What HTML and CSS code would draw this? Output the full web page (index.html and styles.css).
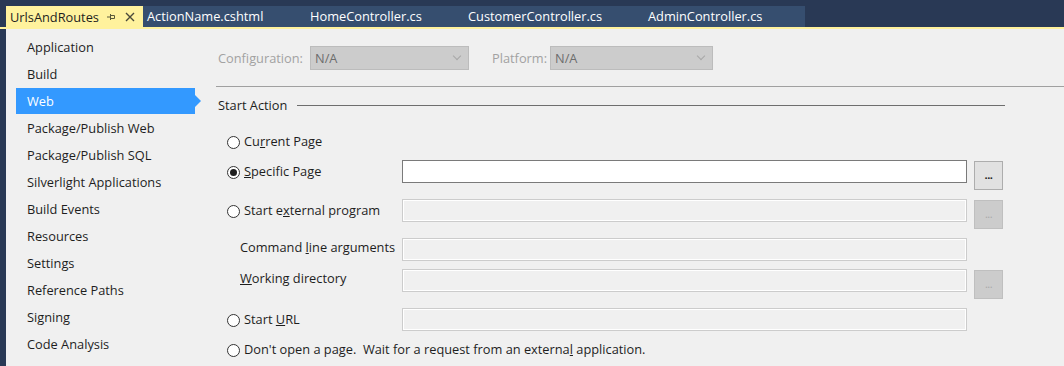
FILE: index.html
```html
<!DOCTYPE html>
<html lang="en">
<head>
  <meta charset="UTF-8">
  <title>UrlsAndRoutes - Web</title>
  <link rel="stylesheet" href="styles.css">
</head>
<body>
  <div class="tabbar">
    <div class="tab active">
      <span class="tab-name">UrlsAndRoutes</span>
      <svg class="pin" width="10" height="10" viewBox="0 0 10 10"><path d="M1 5h3M4.5 2v6M4.5 3.5h4v3h-4" fill="none" stroke="#5a5a3a" stroke-width="1"/></svg>
      <svg class="close" width="10" height="10" viewBox="0 0 10 10"><path d="M1 1l8 8M9 1l-8 8" stroke="#4a4a3a" stroke-width="1.4"/></svg>
    </div>
    <div class="tab">ActionName.cshtml</div>
    <div class="tab">HomeController.cs</div>
    <div class="tab">CustomerController.cs</div>
    <div class="tab">AdminController.cs</div>
  </div>

  <div class="main">
    <ul class="nav">
      <li>Application</li>
      <li>Build</li>
      <li class="selected">Web</li>
      <li>Package/Publish Web</li>
      <li>Package/Publish SQL</li>
      <li>Silverlight Applications</li>
      <li>Build Events</li>
      <li>Resources</li>
      <li>Settings</li>
      <li>Reference Paths</li>
      <li>Signing</li>
      <li>Code Analysis</li>
    </ul>

    <div class="content">
      <div class="config-row">
        <label class="dim">Configuration:</label>
        <div class="select config">N/A<span class="chev"></span></div>
        <label class="dim platform-label">Platform:</label>
        <div class="select platform">N/A<span class="chev"></span></div>
      </div>
      <div class="separator"></div>

      <div class="group-title"><span>Start Action</span><div class="rule"></div></div>

      <div class="options">
        <div class="row r-current">
          <div class="choice"><span class="radio"></span><span class="lbl">Cu<u>r</u>rent Page</span></div>
        </div>
        <div class="row r-specific">
          <div class="choice"><span class="radio checked"></span><span class="lbl"><u>S</u>pecific Page</span></div>
          <div class="field"></div>
          <div class="browse">...</div>
        </div>
        <div class="row r-external">
          <div class="choice"><span class="radio"></span><span class="lbl">Start e<u>x</u>ternal program</span></div>
          <div class="field disabled"></div>
          <div class="browse disabled">...</div>
        </div>
        <div class="row r-cmd">
          <div class="choice sub"><span class="lbl">Command <u>l</u>ine arguments</span></div>
          <div class="field disabled"></div>
        </div>
        <div class="row r-work">
          <div class="choice sub"><span class="lbl"><u>W</u>orking directory</span></div>
          <div class="field disabled"></div>
          <div class="browse disabled">...</div>
        </div>
        <div class="row r-url">
          <div class="choice"><span class="radio"></span><span class="lbl">Start <u>U</u>RL</span></div>
          <div class="field disabled"></div>
        </div>
        <div class="row r-none">
          <div class="choice wide"><span class="radio"></span><span class="lbl">Don't open a page.&nbsp; Wait for a request from an externa<u>l</u> application.</span></div>
        </div>
      </div>
    </div>
  </div>
</body>
</html>
```

FILE: styles.css
```css
* {
  box-sizing: border-box;
}
body {
  margin: 0;
  width: 1064px;
  height: 366px;
  overflow: hidden;
  background: #f0f0f0;
  font-family: "Open Sans", "Noto Sans", sans-serif;
  font-size: 12.8px;
  color: #1e1e1e;
}
.tabbar {
  display: flex;
  height: 29px;
  padding: 6px 0 0 6px;
  background: #293955;
  border-bottom: 2px solid #fff29d;
}
.tab {
  height: 21px;
  line-height: 20px;
  padding: 0 0 0 4px;
  background: #364e6f;
  color: #fff;
  white-space: nowrap;
}
.tab:nth-child(2) { width: 163px; }
.tab:nth-child(3) { width: 158px; }
.tab:nth-child(4) { width: 180px; }
.tab:nth-child(5) { width: 161px; }
.tab.active {
  display: flex;
  align-items: center;
  width: 137px;
  background: #fff29d;
  color: #1e1e1e;
}
.tab.active .pin {
  margin-left: auto;
}
.tab.active .close {
  margin: 0 8px 0 9px;
}
.main {
  display: flex;
  height: 337px;
  border-left: 6px solid #293955;
}
.nav {
  list-style: none;
  margin: 0;
  padding: 5px 0 0 10px;
  width: 210px;
  flex: none;
}
.nav li {
  position: relative;
  width: 179px;
  height: 27px;
  line-height: 27px;
  padding-left: 11px;
}
.nav li.selected {
  background: #3399ff;
  color: #fff;
  height: 26px;
  margin-bottom: 1px;
}
.nav li.selected::after {
  content: "";
  position: absolute;
  right: -6px;
  top: 7px;
  border-left: 6px solid #3399ff;
  border-top: 6px solid transparent;
  border-bottom: 6px solid transparent;
}
.content {
  flex: 1;
  padding-top: 17px;
}
.config-row {
  display: flex;
  align-items: center;
  height: 24px;
  padding-left: 2px;
}
.dim {
  color: #a2a2a2;
  width: 92px;
}
.platform-label {
  width: 58px;
  margin-left: 23px;
}
.select {
  position: relative;
  height: 24px;
  line-height: 22px;
  padding-left: 4px;
  background: #cccccc;
  border: 1px solid #bcbcbc;
  color: #6d6d6d;
}
.select.config { width: 159px; }
.select.platform { width: 163px; }
.chev {
  position: absolute;
  right: 8px;
  top: 6px;
  width: 6px;
  height: 6px;
  border-right: 1px solid #a8a8a8;
  border-bottom: 1px solid #a8a8a8;
  transform: rotate(45deg);
}
.separator {
  margin-top: 16px;
  height: 1px;
  background: #a0a0a0;
}
.group-title {
  display: flex;
  align-items: center;
  width: 789px;
  height: 20px;
  margin-top: 8px;
  padding-left: 2px;
}
.group-title .rule {
  flex: 1;
  height: 1px;
  margin-left: 10px;
  background: #6e6e6e;
}
.options {
  padding-left: 11px;
  margin-top: 15px;
}
.row {
  display: flex;
  align-items: flex-start;
  height: 23px;
}
.choice {
  display: flex;
  align-items: flex-start;
  width: 175px;
  flex: none;
}
.choice.sub {
  padding-left: 13px;
}
.choice.wide {
  width: auto;
}
.lbl {
  padding-top: 1px;
  line-height: 21px;
  white-space: nowrap;
}
.choice.sub .lbl {
  padding-top: 0;
  line-height: 18px;
}
.r-specific { margin-top: 7px; }
.r-external { margin-top: 16px; }
.r-cmd { margin-top: 16px; }
.r-work { margin-top: 8px; }
.r-url { margin-top: 16px; }
.r-none { margin-top: 7px; }
.radio {
  flex: none;
  width: 13px;
  height: 13px;
  margin: 6px 4px 0 0;
  border: 1px solid #333;
  border-radius: 50%;
  background: #fff;
  position: relative;
}
.radio.checked::after {
  content: "";
  position: absolute;
  left: 2px;
  top: 2px;
  width: 7px;
  height: 7px;
  border-radius: 50%;
  background: #1e1e1e;
}
.field {
  flex: none;
  width: 565px;
  height: 23px;
  background: #fff;
  border: 1px solid #7a7a7a;
}
.field.disabled {
  background: #f0f0f0;
  border: 1px solid #cccccc;
  box-shadow: inset 0 0 0 1px #fff;
}
.browse {
  flex: none;
  width: 29px;
  height: 29px;
  margin: 1px 0 0 7px;
  text-align: center;
  line-height: 26px;
  font-size: 11px;
  font-weight: bold;
  letter-spacing: -0.5px;
  background: #e1e1e1;
  border: 1px solid #adadad;
}
.browse.disabled {
  background: #cccccc;
  border-color: #bfbfbf;
  color: #a8a8a8;
  font-weight: normal;
}
```
